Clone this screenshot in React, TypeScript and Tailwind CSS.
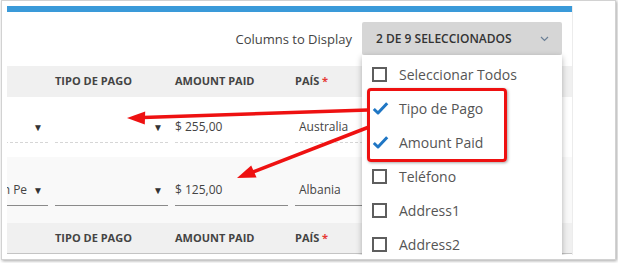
const HeaderRow = ({ last }: { last?: boolean }) => (
  <div
    className={`h-[31px] bg-[#f0f0f0] ${last ? "border-b border-[#c4c4c4]" : ""}`}
  >
    <div className="ml-[-72px] grid h-full grid-cols-[repeat(5,113px)] items-center gap-x-[7px] text-[11px] font-bold uppercase text-[#444]">
      <span />
      <span>Tipo de Pago</span>
      <span>Amount Paid</span>
      <span>
        País <span className="text-[#e53935]">*</span>
      </span>
      <span />
    </div>
  </div>
);

const Caret = () => <span className="text-[10px] leading-none text-[#333]">▼</span>;

const Field = ({
  children,
  dashed,
  className = "",
}: {
  children?: React.ReactNode;
  dashed?: boolean;
  className?: string;
}) => (
  <div
    className={`flex h-[31px] items-center border-b ${
      dashed ? "border-dashed border-[#d6d6d6]" : "border-[#8a8a8a]"
    } ${className}`}
  >
    {children}
  </div>
);

const Check = () => (
  <svg width="17" height="15" viewBox="0 0 17 15" className="shrink-0">
    <path
      d="M1.8 8 L6 12 L15.2 2.2"
      fill="none"
      stroke="#1f76c4"
      strokeWidth="3"
      strokeLinejoin="round"
    />
  </svg>
);

const Box = () => (
  <span className="block h-[15px] w-[15px] shrink-0 border-2 border-[#5e5e5e]" />
);

const items = [
  { label: "Seleccionar Todos", on: false },
  { label: "Tipo de Pago", on: true },
  { label: "Amount Paid", on: true },
  { label: "Teléfono", on: false },
  { label: "Address1", on: false },
  { label: "Address2", on: false },
];

export default function App() {
  return (
    <div
      className="h-[263px] w-[618px] bg-white"
      style={{ fontFamily: '"Open Sans", "Liberation Sans", sans-serif' }}
    >
      <div className="ml-[1px] h-[260px] w-[615px] border border-[#d2d2d2] bg-white p-[5px] shadow-[1px_1px_3px_rgba(0,0,0,0.35)]">
        <div className="relative h-[249px] w-[566px] overflow-hidden border-r border-[#ececec]">
          <div className="h-[6px] bg-[#3a9ad9]" />

          {/* toolbar */}
          <div className="flex h-[54px] items-start justify-end gap-[10px] pr-[10px] pt-[10px]">
            <span className="mt-[8px] text-[13px] text-[#444]">Columns to Display</span>
            <button
              type="button"
              className="flex h-[33px] w-[200px] items-center justify-between rounded-[2px] bg-[#d6d6d6] pl-[14px] pr-[13px] text-[12px] font-semibold text-[#333]"
            >
              <span>2 DE 9 SELECCIONADOS</span>
              <svg width="9" height="6" viewBox="0 0 9 6">
                <path d="M1 1 L4.5 4.5 L8 1" fill="none" stroke="#6a7f96" strokeWidth="1.2" />
              </svg>
            </button>
          </div>

          <HeaderRow />

          {/* row 1 */}
          <div className="h-[60px] bg-white pt-[15px]">
            <div className="ml-[-72px] grid grid-cols-[repeat(5,113px)] gap-x-[7px] text-[12px] text-[#444]">
              <Field dashed className="justify-end pr-[5px]">
                <Caret />
              </Field>
              <Field dashed className="justify-end pr-[5px]">
                <Caret />
              </Field>
              <Field dashed>$ 255,00</Field>
              <Field dashed className="pl-[4px]">Australia</Field>
              <Field dashed />
            </div>
          </div>

          {/* row 2 */}
          <div className="h-[66px] bg-[#f9f9f9] pt-[18px]">
            <div className="ml-[-72px] grid grid-cols-[repeat(5,113px)] gap-x-[7px] text-[12px] text-[#444]">
              <Field className="justify-end gap-[6px] pr-[5px]">
                <span>n Pe</span>
                <Caret />
              </Field>
              <Field className="justify-end pr-[5px]">
                <Caret />
              </Field>
              <Field>$ 125,00</Field>
              <Field className="pl-[4px]">Albania</Field>
              <Field />
            </div>
          </div>

          <HeaderRow last />

          {/* columns menu */}
          <div className="absolute left-[355px] top-[49px] w-[200px] bg-white pt-[2px] shadow-[0_2px_6px_rgba(0,0,0,0.3)]">
            {items.map((it) => (
              <div key={it.label} className="flex h-[34px] items-center gap-[12px] pl-[10px] text-[14px] text-[#555]">
                {it.on ? <Check /> : <Box />}
                <span className={it.on ? "-ml-[2px]" : ""}>{it.label}</span>
              </div>
            ))}
          </div>

          {/* highlight */}
          <div className="absolute left-[360px] top-[82px] h-[74px] w-[140px] rounded-[4px] border-[3px] border-[#ee1111] shadow-[1px_1px_3px_rgba(0,0,0,0.35)]" />

          <svg className="pointer-events-none absolute left-0 top-0" width="566" height="249">
            <line x1="361" y1="104" x2="136" y2="111.5" stroke="#ee1111" strokeWidth="3.5" />
            <polygon points="120,112 138.2,105.4 137.8,118.4" fill="#ee1111" />
            <line x1="362" y1="121" x2="246" y2="166" stroke="#ee1111" strokeWidth="3.5" />
            <polygon points="230,172 249.5,171.5 244.2,159.4" fill="#ee1111" />
          </svg>
        </div>
      </div>
    </div>
  );
}
